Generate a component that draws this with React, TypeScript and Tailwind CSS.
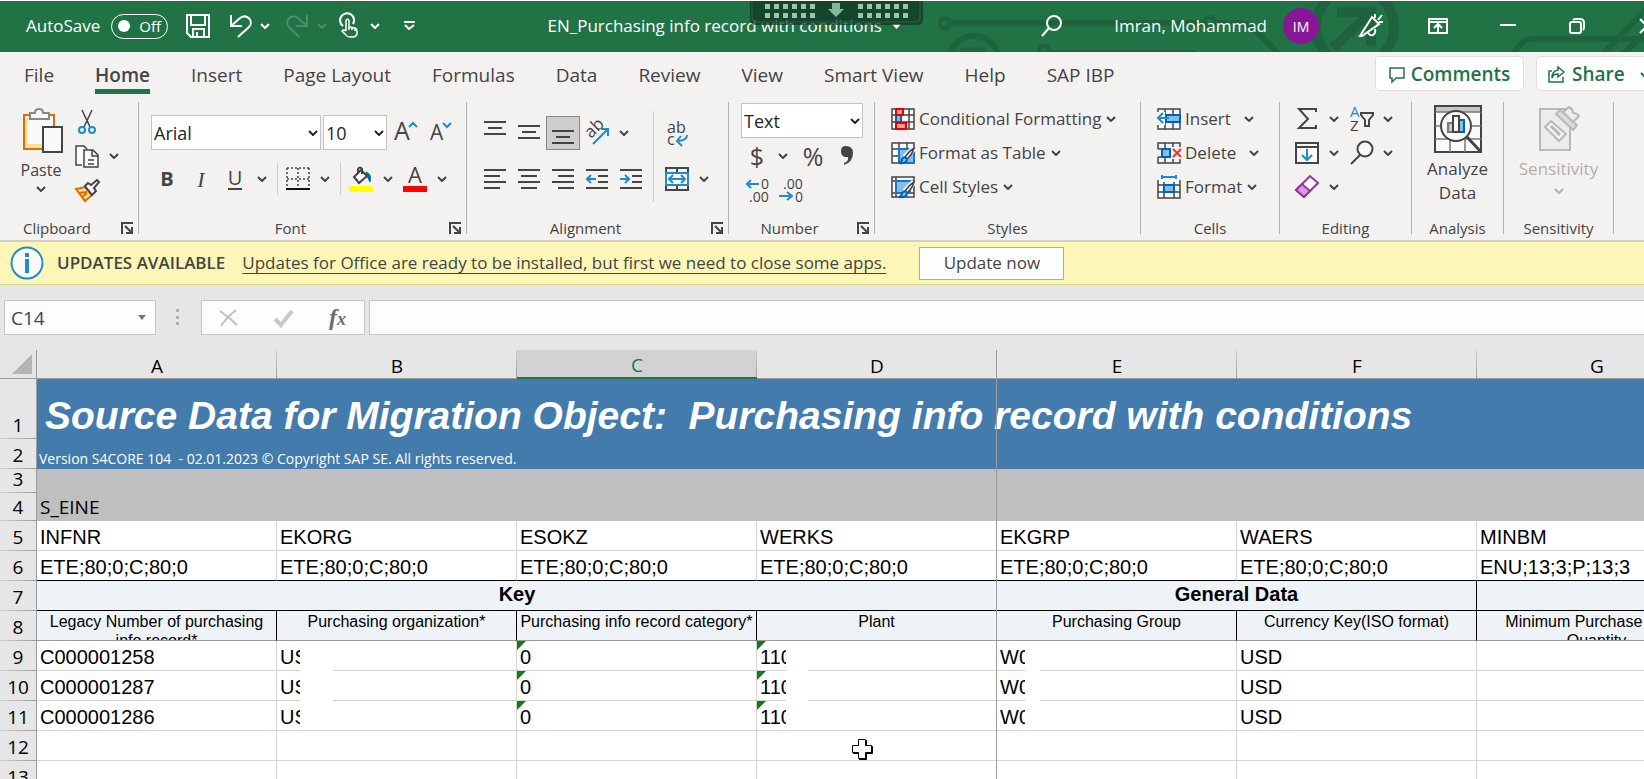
import type { ReactNode } from 'react'
import clsx from 'clsx'

const TABS = [
  'File',
  'Home',
  'Insert',
  'Page Layout',
  'Formulas',
  'Data',
  'Review',
  'View',
  'Smart View',
  'Help',
  'SAP IBP',
]

const COLUMNS = ['A', 'B', 'C', 'D', 'E', 'F', 'G']

const FIELDS = ['INFNR', 'EKORG', 'ESOKZ', 'WERKS', 'EKGRP', 'WAERS', 'MINBM']

const TYPES = [
  'ETE;80;0;C;80;0',
  'ETE;80;0;C;80;0',
  'ETE;80;0;C;80;0',
  'ETE;80;0;C;80;0',
  'ETE;80;0;C;80;0',
  'ETE;80;0;C;80;0',
  'ENU;13;3;P;13;3',
]

const HEADINGS = [
  'Legacy Number of purchasing info record*',
  'Purchasing organization*',
  'Purchasing info record category*',
  'Plant',
  'Purchasing Group',
  'Currency Key(ISO format)',
  'Minimum Purchase Order Quantity',
]

const RECORDS = [
  ['C000001258', 'US', '0', '110', 'W0', 'USD', ''],
  ['C000001287', 'US', '0', '110', 'W0', 'USD', ''],
  ['C000001286', 'US', '0', '110', 'W0', 'USD', ''],
]

const DARK = '#444444'
const BLUE = '#1e8bcd'

interface IconProps {
  w?: number
  h?: number
  children: ReactNode
}

function Icon({ w = 24, h = 24, children }: IconProps) {
  return (
    <svg
      width={w}
      height={h}
      viewBox={`0 0 ${w} ${h}`}
      fill="none"
      stroke={DARK}
      strokeWidth="2"
      className="shrink-0 overflow-visible"
      aria-hidden="true"
    >
      {children}
    </svg>
  )
}

function Chevron({ color = DARK }: { color?: string }) {
  return (
    <svg
      width="10"
      height="6"
      viewBox="0 0 10 6"
      fill="none"
      stroke={color}
      strokeWidth="2"
      className="shrink-0"
      aria-hidden="true"
    >
      <path d="M1 1l4 4 4-4" />
    </svg>
  )
}

function Tool({ label, active, children }: { label: string; active?: boolean; children: ReactNode }) {
  return (
    <button
      type="button"
      aria-label={label}
      className={clsx(
        'flex h-[34px] w-[34px] shrink-0 items-center justify-center',
        active && 'border border-[#8a8886] bg-[#cfcecd]'
      )}
    >
      {children}
    </button>
  )
}

function Drop({ label }: { label: string }) {
  return (
    <button
      type="button"
      aria-label={label}
      className="flex h-[34px] w-5 shrink-0 items-center justify-center"
    >
      <Chevron />
    </button>
  )
}

function Picker({ label, value, className }: { label: string; value: string; className: string }) {
  return (
    <div className={clsx('relative h-[35px] shrink-0', className)}>
      <select
        aria-label={label}
        className="h-full w-full appearance-none border border-[#c4c4c4] bg-white pt-px pl-[2px] text-[18px] text-[#262626]"
      >
        <option>{value}</option>
      </select>
      <span className="pointer-events-none absolute inset-y-0 right-[3px] flex items-center">
        <Chevron color="#262626" />
      </span>
    </div>
  )
}

function Divider() {
  return <div className="mr-[3px] ml-[5px] h-8 w-px bg-[#d0cecc]" />
}

interface GroupProps {
  name: string
  launcher?: boolean
  className: string
  children: ReactNode
}

function Group({ name, launcher, className, children }: GroupProps) {
  return (
    <section className={clsx('flex shrink-0', className)} aria-label={name}>
      <div className="flex h-[138px] flex-1 flex-col pb-[2px]">
        <div className="flex-1">{children}</div>
        <div className="flex h-5 items-center">
          <span className="flex-1 text-center text-[15px] leading-5">{name}</span>
          {launcher && (
            <button type="button" aria-label={`${name} settings`} className="w-6 pl-[7px]">
              <Icon w={13} h={13}>
                <path d="M1 12V1h11" />
                <path d="M4 4l6 6M11 5v6H5" />
              </Icon>
            </button>
          )}
        </div>
      </div>
      <div className="h-[132px] w-px bg-[#b3b0ad]" />
    </section>
  )
}

function TitleBar() {
  return (
    <header className="relative flex h-[52px] items-center overflow-hidden border-t border-white bg-[#217346] pb-px pl-[26px] text-[17px] text-white">
      <svg
        className="absolute top-0 right-0"
        width="784"
        height="52"
        viewBox="860 0 784 52"
        fill="none"
        stroke="#1e633e"
        strokeWidth="6"
        aria-hidden="true"
      >
        <circle cx="945" cy="22" r="5" strokeWidth="4" />
        <path d="M951 22H1204" />
        <circle cx="1210" cy="21" r="5" strokeWidth="4" />
        <path d="M1216 22H1240q8 0 14 6l26 26" />
        <circle cx="974" cy="60" r="25" />
        <path d="M960 49h25M954 53h36" strokeWidth="5" />
        <circle cx="1044" cy="50" r="5" strokeWidth="4" />
        <path d="M1050 51H1195" strokeWidth="4" />
        <circle cx="1355" cy="26" r="39" strokeWidth="10" />
        <path d="M1337 11h34v34M1369 13l-36 34" strokeWidth="10" />
        <path d="M1512 54l10-12q4-4 9-4h113" />
        <path d="M1602 54l44-46M1622 54l24-22" />
      </svg>

      <label className="relative flex items-center gap-[11px]">
        AutoSave
        <input type="checkbox" role="switch" className="sr-only" />
        <span className="flex h-[25px] w-[57px] items-center rounded-full border border-white pl-[6px] text-[15px]">
          <span className="mr-[9px] h-3 w-3 rounded-full bg-white" />
          Off
        </span>
      </label>
      <div className="relative flex items-center">
        <button type="button" aria-label="Save" className="ml-[18px]">
          <Icon>
            <path d="M1 1h22v22H5l-4-4z M5 1v10h14V1 M7 23v-8h11v8 M11 18v5" stroke="#fff" />
          </Icon>
        </button>
        <button type="button" aria-label="Undo" className="ml-[19px]">
          <Icon w={23}>
            <path d="M2 1v11h11 M2 12L11 4c8-5 14 4 9 9L9 23" stroke="#fff" />
          </Icon>
        </button>
        <button type="button" aria-label="Undo history" className="ml-2">
          <Chevron color="#fff" />
        </button>
        <button type="button" aria-label="Redo" className="ml-4">
          <Icon w={23}>
            <path d="M21 1v11H10 M21 12L12 4C4-1-2 8 3 13l10 10" stroke="#4d8f6b" />
          </Icon>
        </button>
        <button type="button" aria-label="Redo history" className="ml-2">
          <Chevron color="#4d8f6b" />
        </button>
        <button type="button" aria-label="Touch mode" className="ml-[13px]">
          <Icon w={18}>
            <path d="M3 12A7 7 0 1 1 13 10" stroke="#fff" />
            <path
              d="M6 17V7c0-2.5 3-2.5 3 0v6l6 1q2 1 2 3v3q-1 3-4 3h-3q-3 0-4-2l-4-4q1-2 4 0M9 13v3M12 13v3M15 14v3"
              stroke="#fff"
              strokeWidth="1.5"
            />
          </Icon>
        </button>
        <button type="button" aria-label="Touch mode options" className="ml-3">
          <Chevron color="#fff" />
        </button>
        <button type="button" aria-label="Customize toolbar" className="ml-6">
          <Icon w={11} h={10}>
            <path d="M0 1h11M1 4l4 4 5-4" stroke="#fff" />
          </Icon>
        </button>
      </div>

      <h1 className="relative flex flex-1 items-center justify-center gap-[10px] pr-2 whitespace-nowrap">
        EN_Purchasing info record with conditions
        <svg width="9" height="5" viewBox="0 0 9 5" fill="#fff" aria-hidden="true">
          <path d="M0 0h9L4.5 5z" />
        </svg>
      </h1>

      <div className="relative -mr-[11px] flex items-center">
        <button type="button" aria-label="Search">
          <Icon w={22} h={22}>
            <circle cx="13" cy="8" r="7" stroke="#fff" />
            <path d="M8 13l-7 8" stroke="#fff" />
          </Icon>
        </button>
        <button type="button" className="ml-[51px] flex items-center gap-4">
          Imran, Mohammad
          <span className="flex h-9 w-9 items-center justify-center rounded-full bg-[#881798] text-[14px]">
            IM
          </span>
        </button>
        <button type="button" aria-label="What's new" className="ml-10">
          <Icon>
            <path d="M1 22L13 3l7 7-17 12zM9 18q1 4 5 3 3-2 2-6" stroke="#fff" />
            <path d="M16 4V0M19 6l4-5M20 8h4" stroke="#fff" />
          </Icon>
        </button>
        <button type="button" aria-label="Ribbon display options" className="ml-[45px]">
          <Icon w={20} h={16}>
            <path d="M1 1h18v14H1zM1 4h18M10 14V7M6 10l4-4 4 4" stroke="#fff" />
          </Icon>
        </button>
        <button type="button" aria-label="Minimize" className="ml-[52px]">
          <Icon w={16} h={16}>
            <path d="M0 7h16" stroke="#fff" />
          </Icon>
        </button>
        <button type="button" aria-label="Restore" className="ml-[53px]">
          <Icon w={16} h={16}>
            <rect x="1" y="4" width="11" height="11" rx="2" stroke="#fff" />
            <path d="M4 2q1-1 3-1h4q4 0 4 4v4q0 2-1 3" stroke="#fff" />
          </Icon>
        </button>
        <button type="button" aria-label="Close" className="ml-[54px]">
          <Icon w={16} h={16}>
            <path d="M1 1l14 14M15 1L1 15" stroke="#fff" />
          </Icon>
        </button>
      </div>

      {/* remote session handle */}
      <svg
        className="absolute top-0 left-[750px]"
        width="173"
        height="25"
        viewBox="0 0 173 25"
        aria-hidden="true"
      >
        <path d="M0 0h173v18q0 6-6 6H6q-6 0-6-6z" fill="#0f3320" fillOpacity=".7" />
        <path d="M2 0v17q0 4 4 4h159q5 0 5-4V0" fill="none" stroke="#3d6b52" strokeOpacity=".7" />
        {[0, 1, 2, 3, 4, 5].map((i) => (
          <g key={i} fill="#9cc5ae">
            <rect x={15 + i * 9} y="3" width="5" height="5" />
            <rect x={15 + i * 9} y="12" width="5" height="5" />
            <rect x={108 + i * 9} y="3" width="5" height="5" />
            <rect x={108 + i * 9} y="12" width="5" height="5" />
          </g>
        ))}
        <path d="M82 2h8v6h4l-8 8-8-8h4z" fill="#84ba9b" />
      </svg>
    </header>
  )
}

function TabRow() {
  return (
    <nav className="flex h-[50px] items-start justify-between overflow-hidden pt-1">
      <div className="flex gap-[41px] pt-1 pl-6 whitespace-nowrap">
        {TABS.map((tab) => (
          <button
            type="button"
            key={tab}
            className={clsx(
              'h-[34px] border-b-[5px] pt-[2px] text-[19px] leading-[27px]',
              tab === 'Home' ? 'border-[#217346] font-semibold' : 'border-transparent'
            )}
          >
            {tab}
          </button>
        ))}
      </div>
      <div className="-mr-5 flex gap-3 text-[19px] font-semibold text-[#217346]">
        <button
          type="button"
          className="flex h-[35px] w-[149px] items-center justify-center gap-[6px] rounded-[4px] border border-[#e1dfdd] bg-white pt-[2px]"
        >
          <Icon w={16} h={16}>
            <path d="M1 1h14v10H7l-4 4v-4H1z" stroke="#217346" strokeWidth="1.5" />
          </Icon>
          Comments
        </button>
        <button
          type="button"
          className="flex h-[35px] w-[128px] items-center gap-[7px] rounded-[4px] border border-[#e1dfdd] bg-white pt-[2px] pl-[11px]"
        >
          <Icon w={17} h={17}>
            <path d="M4 5H1v11h14v-5M10 1l6 5-6 5V8q-5 0-6 4 0-7 6-8z" stroke="#217346" strokeWidth="1.5" />
          </Icon>
          Share
          <span className="pl-2">
            <Chevron color="#217346" />
          </span>
        </button>
      </div>
    </nav>
  )
}

function ClipboardGroup() {
  return (
    <Group name="Clipboard" launcher className="w-[139px]">
      <div className="flex gap-2 pl-5">
        <button type="button" className="flex flex-col items-center pt-[6px] text-[16px]">
          <Icon w={42} h={46}>
            <path d="M3 7h32v34H3z" fill="#fafafa" stroke="none" />
            <path d="M6 10v28h16" stroke="#fbdf9c" strokeWidth="4" />
            <path d="M10 7H4v34h18M28 7h6v11" stroke="#e06c00" />
            <path d="M10 11V5h5q0-4 4-4t4 4h6v6z" fill="#fafafa" stroke="#8a8886" />
            <path d="M23 19h19v25H23z" fill="#fafafa" />
          </Icon>
          <span className="leading-8">Paste</span>
          <Chevron />
        </button>
        <div className="flex flex-col pt-[3px]">
          <Tool label="Cut">
            <Icon w={18} h={26}>
              <path d="M4 1l8 17M14 1L6 18" strokeWidth="1.5" />
              <circle cx="4" cy="21" r="3" stroke={BLUE} />
              <circle cx="14" cy="21" r="3" stroke={BLUE} />
            </Icon>
          </Tool>
          <div className="flex">
            <Tool label="Copy">
              <Icon w={26}>
                <path d="M8 21H2V2h8l3 3" fill="#fafafa" strokeWidth="1.5" />
                <path d="M10 6h9l5 5v12H10zM18 6v6h6M14 16h6M14 20h6" fill="#fafafa" strokeWidth="1.5" />
              </Icon>
            </Tool>
            <Drop label="Copy options" />
          </div>
          <Tool label="Format painter">
            <Icon w={26}>
              <path d="M2 11l9-2 7 8-7 6z" fill="#fbdf9c" stroke="#e06c00" />
              <path d="M5 15l8-1M8 19l5-4" stroke="#e06c00" />
              <path d="M11 8l3-3 3 2 6-5 2 2-5 6 2 3-4 4z" fill="#fafafa" />
            </Icon>
          </Tool>
        </div>
      </div>
    </Group>
  )
}

function FontGroup() {
  return (
    <Group name="Font" launcher className="w-[328px]">
      <div className="flex flex-col gap-3 pt-[13px] pl-[11px]">
        <div className="flex pl-px">
          <Picker label="Font" value="Arial" className="mr-[2px] w-[170px]" />
          <Picker label="Font size" value="10" className="w-16" />
          <Tool label="Increase font size">
            <Icon>
              <text x="2" y="20" fontSize="25" fill={DARK} stroke="none">
                A
              </text>
              <path d="M17 7l4-4 4 4" stroke={BLUE} />
            </Icon>
          </Tool>
          <Tool label="Decrease font size">
            <Icon>
              <text x="4" y="20" fontSize="21" fill={DARK} stroke="none">
                A
              </text>
              <path d="M17 3l4 4 4-4" stroke={BLUE} />
            </Icon>
          </Tool>
        </div>
        <div className="flex items-center text-[20px]">
          <Tool label="Bold">
            <b>B</b>
          </Tool>
          <Tool label="Italic">
            <i className="font-['Liberation_Serif'] text-[22px]">I</i>
          </Tool>
          <Tool label="Underline">
            <span className="border-b-2 border-[#444] leading-5">U</span>
          </Tool>
          <Drop label="Underline options" />
          <Divider />
          <Tool label="Borders">
            <Icon>
              <path d="M1 1h22M1 12h22M1 1v20M12 1v20M23 1v20" strokeDasharray="2 2" strokeWidth="1.5" />
              <path d="M0 22h24" stroke="#111" />
            </Icon>
          </Tool>
          <Drop label="Border options" />
          <Divider />
          <Tool label="Fill color">
            <Icon w={26} h={26}>
              <path d="M6 11l7-7 6 6-8 7z" fill="#fafafa" />
              <path d="M10 8V3q2-3 4 0v5" />
              <path d="M18 6q6 2 4 10-3-5-4-10z" fill="#0063b1" stroke="#0063b1" strokeWidth="1" />
              <path d="M1 23h24" stroke="#ffff00" strokeWidth="6" />
            </Icon>
          </Tool>
          <Drop label="Fill color options" />
          <Tool label="Font color">
            <Icon w={26} h={26}>
              <text x="6" y="17" fontSize="22" fill={DARK} stroke="none">
                A
              </text>
              <path d="M1 23h24" stroke="#ff0000" strokeWidth="6" />
            </Icon>
          </Tool>
          <Drop label="Font color options" />
        </div>
      </div>
    </Group>
  )
}

function AlignmentGroup() {
  return (
    <Group name="Alignment" launcher className="w-[262px]">
      <div className="flex pl-[11px]">
        <div className="flex w-[175px] flex-col gap-3 pt-[14px]">
          <div className="flex">
            <Tool label="Top align">
              <Icon w={22}>
                <path d="M0 1h22M4 7h14M0 13h22" />
              </Icon>
            </Tool>
            <Tool label="Middle align">
              <Icon w={22}>
                <path d="M0 5h22M4 11h14M0 17h22" />
              </Icon>
            </Tool>
            <Tool label="Bottom align" active>
              <Icon w={22}>
                <path d="M0 10h22M4 16h14M0 22h22" />
              </Icon>
            </Tool>
            <Tool label="Orientation">
              <Icon w={26} h={26}>
                <text x="0" y="0" fontSize="17" fill={DARK} stroke="none" transform="translate(7 19) rotate(-45)">
                  ab
                </text>
                <path d="M9 24L24 9M17 9h7v7" stroke={BLUE} />
              </Icon>
            </Tool>
            <Drop label="Orientation options" />
          </div>
          <div className="flex">
            <Tool label="Align left">
              <Icon w={22}>
                <path d="M0 3h22M0 9h16M0 15h22M0 21h16" />
              </Icon>
            </Tool>
            <Tool label="Center">
              <Icon w={22}>
                <path d="M0 3h22M3 9h16M0 15h22M3 21h16" />
              </Icon>
            </Tool>
            <Tool label="Align right">
              <Icon w={22}>
                <path d="M0 3h22M6 9h16M0 15h22M6 21h16" />
              </Icon>
            </Tool>
            <Tool label="Decrease indent">
              <Icon w={22}>
                <path d="M0 3h22M12 9h10M12 15h10M0 21h22" />
                <path d="M10 12H1M5 8l-4 4 4 4" stroke={BLUE} />
              </Icon>
            </Tool>
            <Tool label="Increase indent">
              <Icon w={22}>
                <path d="M0 3h22M12 9h10M12 15h10M0 21h22" />
                <path d="M0 12h8M5 8l4 4-4 4" stroke={BLUE} />
              </Icon>
            </Tool>
          </div>
        </div>
        <div className="mt-[9px] h-[91px] w-px bg-[#d0cecc]" />
        <div className="flex flex-col gap-3 pt-[14px] pl-[6px]">
          <Tool label="Wrap text">
            <Icon w={24} h={28}>
              <text x="2" y="14" fontSize="16" fill={DARK} stroke="none">
                ab
              </text>
              <text x="2" y="26" fontSize="16" fill={DARK} stroke="none">
                c
              </text>
              <path d="M22 16q0 6-10 6M16 17l-4 5 5 5" stroke={BLUE} />
            </Icon>
          </Tool>
          <div className="flex">
            <Tool label="Merge and center">
              <Icon>
                <path d="M1 1h22v22H1zM12 1v5M12 18v5" />
                <path d="M1 6h22v12H1z" fill="#fafafa" stroke={BLUE} />
                <path d="M4 12h16M8 8l-4 4 4 4M16 8l4 4-4 4" stroke={BLUE} />
              </Icon>
            </Tool>
            <Drop label="Merge options" />
          </div>
        </div>
      </div>
    </Group>
  )
}

function NumberGroup() {
  return (
    <Group name="Number" launcher className="w-[146px]">
      <div className="pt-px pl-3">
        <Picker label="Number format" value="Text" className="w-[122px]" />
        <div className="flex items-center">
          <button type="button" aria-label="Currency" className="w-8 text-[25px] leading-9">
            $
          </button>
          <Drop label="Currency options" />
          <button type="button" aria-label="Percent" className="w-10 text-[25px] leading-9">
            %
          </button>
          <button
            type="button"
            aria-label="Comma style"
            className="flex w-7 items-center justify-center"
          >
            <svg width="12" height="20" viewBox="0 0 12 20" fill={DARK} aria-hidden="true">
              <path d="M5 0q7 0 7 7 0 9-9 12v-2q5-2 4-6-7 1-7-6 0-5 5-5z" />
            </svg>
          </button>
        </div>
        <div className="flex">
          <Tool label="Increase decimal">
            <Icon w={26} h={26}>
              <text x="16" y="11" fontSize="14" fill={DARK} stroke="none">
                0
              </text>
              <text x="4" y="24" fontSize="14" fill={DARK} stroke="none">
                .00
              </text>
              <path d="M14 6H2M6 2L2 6l4 4" stroke={BLUE} />
            </Icon>
          </Tool>
          <Tool label="Decrease decimal">
            <Icon w={26} h={26}>
              <text x="4" y="11" fontSize="14" fill={DARK} stroke="none">
                .00
              </text>
              <text x="16" y="24" fontSize="14" fill={DARK} stroke="none">
                0
              </text>
              <path d="M0 18h13M8 14l5 4-5 4" stroke={BLUE} />
            </Icon>
          </Tool>
        </div>
      </div>
    </Group>
  )
}

function CommandRow({ icon, text, wide }: { icon: ReactNode; text: string; wide?: boolean }) {
  return (
    <button type="button" className="flex h-[34px] items-center text-[17px] whitespace-nowrap">
      {icon}
      <span className={clsx('pl-1', wide ? 'pr-[13px]' : 'pr-[5px]')}>{text}</span>
      <Chevron />
    </button>
  )
}

function Brush() {
  return (
    <>
      <path d="M23 7L14 16" stroke="#fafafa" strokeWidth="6" />
      <path d="M23 7q-5 3-9 9l2 2q5-4 7-11z" fill="#fafafa" strokeWidth="1.5" />
      <path d="M8 22q3-1 3-4 3-3 5 0 0 5-8 4z" fill="#83beec" stroke="#0063b1" />
    </>
  )
}

function StylesGroup() {
  return (
    <Group name="Styles" className="w-[266px]">
      <div className="flex flex-col items-start pl-4">
        <CommandRow
          text="Conditional Formatting"
          icon={
            <Icon>
              <path d="M1 2h22v20H1zM1 8h22M1 15h22M5 2v20M18 2v20" fill="#fafafa" strokeWidth="1.5" />
              <path d="M5 8h5v7H5z" fill="#83beec" stroke="#0063b1" />
              <path d="M5 2h7v6H5zM5 16h10v6H5z" fill="#ff9a9a" stroke="#e00000" />
            </Icon>
          }
        />
        <CommandRow
          text="Format as Table"
          icon={
            <Icon>
              <path d="M1 2h22v20H1zM1 8h22M1 15h22M8 2v20M16 2v20" fill="#fafafa" strokeWidth="1.5" />
              <path d="M8 8h15v14H8z" fill="#83beec" stroke="#1e75bd" />
              <Brush />
            </Icon>
          }
        />
        <CommandRow
          text="Cell Styles"
          icon={
            <Icon>
              <path d="M1 2h22v20H1zM1 6h22M5 2v20M1 18h22" fill="#fafafa" strokeWidth="1.5" />
              <path d="M5 6h14v12H5z" fill="#83beec" stroke="#1e75bd" />
              <Brush />
            </Icon>
          }
        />
      </div>
    </Group>
  )
}

function CellsGroup() {
  return (
    <Group name="Cells" className="w-[139px]">
      <div className="flex flex-col items-start pl-4">
        <CommandRow
          wide
          text="Insert"
          icon={
            <Icon>
              <path d="M1 2h22v20H1zM1 8h22M1 15h22M8 2v20M16 2v20" fill="#fafafa" strokeWidth="1.5" />
              <path d="M9 8h14v7H9z" fill="#83beec" stroke="#0063b1" />
              <path d="M0 5h8v13H0z" fill="#f3f2f1" stroke="none" />
              <path d="M12 11H1M6 6l-5 5 5 5" stroke={BLUE} />
            </Icon>
          }
        />
        <CommandRow
          wide
          text="Delete"
          icon={
            <Icon>
              <path d="M1 8V2h22v5M1 16v6h22v-6M8 2v6M16 2v6M8 16v6M16 16v6M1 8h22M1 16h22" strokeWidth="1.5" />
              <path d="M5 8h8v8H5z" fill="#83beec" stroke="#0063b1" />
              <path d="M14 6h10v12H14z" fill="#f3f2f1" stroke="none" />
              <path d="M16 8l8 8M24 8l-8 8" stroke="#e8333a" />
            </Icon>
          }
        />
        <CommandRow
          text="Format"
          icon={
            <Icon>
              <path d="M1 5v18h22V5M1 10h22M1 17h22M7 7v16M17 7v16" fill="#fafafa" strokeWidth="1.5" />
              <path d="M7 10h10v7H7z" fill="#83beec" stroke="#0063b1" />
              <path d="M5 2h14M5 0v4M19 0v4" stroke={BLUE} />
            </Icon>
          }
        />
      </div>
    </Group>
  )
}

function EditingGroup() {
  return (
    <Group name="Editing" className="w-[132px]">
      <div className="grid grid-cols-[34px_20px_34px_20px] pl-[10px]">
        <Tool label="AutoSum">
          <Icon w={20}>
            <path d="M19 5V2H2l9 10-9 9h17v-3" />
          </Icon>
        </Tool>
        <Drop label="AutoSum options" />
        <Tool label="Sort and filter">
          <Icon w={26} h={26}>
            <text x="2" y="11" fontSize="15" fill={BLUE} stroke="none">
              A
            </text>
            <text x="2" y="25" fontSize="15" fill={DARK} stroke="none">
              Z
            </text>
            <path d="M13 7h12v2l-4 5v6h-4v-6l-4-5z" />
          </Icon>
        </Tool>
        <Drop label="Sort options" />
        <Tool label="Fill">
          <Icon>
            <path d="M1 2h22v20H1zM1 6h22" fill="#fafafa" />
            <path d="M12 8v11M7 14l5 5 5-5" stroke={BLUE} />
          </Icon>
        </Tool>
        <Drop label="Fill options" />
        <Tool label="Find and select">
          <Icon>
            <circle cx="16" cy="8" r="7.5" fill="#fafafa" />
            <path d="M11 14l-9 9" />
          </Icon>
        </Tool>
        <Drop label="Find options" />
        <Tool label="Clear">
          <Icon>
            <path d="M1 15L15 1l8 7L9 22z" fill="#fafafa" stroke="#9b2fa3" />
            <path d="M1 15l6-6 8 7-6 6z" fill="#d59ddb" stroke="#9b2fa3" />
          </Icon>
        </Tool>
        <Drop label="Clear options" />
      </div>
    </Group>
  )
}

function AnalysisGroup() {
  return (
    <Group name="Analysis" className="w-[92px]">
      <button type="button" className="flex w-full flex-col items-center pt-[3px] text-[17px] leading-6">
        <Icon w={48} h={48}>
          <path d="M1 1h46v46H1z" fill="#fafafa" />
          <path d="M2 2h44v5H2z" fill="#c8c6c4" stroke="none" />
          <path d="M1 7h46M1 21h46M1 34h46M16 34v13M31 34v13" strokeWidth="1.5" stroke="#797775" />
          <circle cx="22" cy="21" r="15" fill="#fafafa" />
          <path d="M33 32l14 15" strokeWidth="3" />
          <path d="M14 18h5v9h-5z" fill="#c8c6c4" stroke="#797775" />
          <path d="M25 15h5v12h-5z" fill="#83beec" stroke="#0063b1" />
          <path d="M19 11h6v16h-6z" fill="#fff" />
        </Icon>
        <span className="pt-1">Analyze</span>
        <span>Data</span>
      </button>
    </Group>
  )
}

function SensitivityGroup() {
  return (
    <Group name="Sensitivity" className="w-[110px]">
      <button
        type="button"
        disabled
        className="flex w-full flex-col items-center pt-[3px] text-[17px] leading-6 text-[#b1afad]"
      >
        <Icon w={40} h={48}>
          <path d="M1 4h30v41H1z" fill="#ececec" stroke="#b8b8b8" />
          <path d="M6 22l6-6 15 13-7 7z" fill="#f3f2f1" stroke="#b8b8b8" />
          <path d="M12 21l9 9" stroke="#b8b8b8" strokeWidth="3" />
          <path d="M17 9l4-4 17 15-4 5z" fill="#dcdcdc" stroke="#b8b8b8" />
          <path d="M24 7l6-5q4 2 4 6 4 0 6 3l-6 6z" fill="#ececec" stroke="#b8b8b8" />
        </Icon>
        <span className="pt-1">Sensitivity</span>
        <span className="flex h-5 items-center">
          <Chevron color="#b1afad" />
        </span>
      </button>
    </Group>
  )
}

function UpdateBar() {
  return (
    <div className="flex h-11 items-center border-y border-[#d8d78c] bg-[#fcf7b6] pl-[10px] text-[17px]">
      <Icon w={34} h={34}>
        <circle cx="17" cy="17" r="15.5" fill="#fafafa" stroke={BLUE} />
        <path d="M17 7v4M17 13v14" stroke={BLUE} strokeWidth="4" />
      </Icon>
      <strong className="pl-[13px] font-semibold whitespace-nowrap">UPDATES AVAILABLE</strong>
      <a href="#" className="ml-[17px] whitespace-nowrap underline underline-offset-4">
        Updates for Office are ready to be installed, but first we need to close some apps.
      </a>
      <button
        type="button"
        className="ml-[33px] h-[33px] w-[145px] shrink-0 border border-[#ababab] bg-[#fdfdfd]"
      >
        Update now
      </button>
    </div>
  )
}

function FormulaBar() {
  return (
    <div className="flex h-[65px] items-center bg-[#e6e6e6] pl-1">
      <div className="relative h-[35px] w-[152px] shrink-0">
        <input
          aria-label="Name box"
          defaultValue="C14"
          className="h-full w-full border border-[#c6c6c6] bg-[#fdfdfd] pl-[6px] text-[19px]"
        />
        <svg
          className="absolute top-[15px] right-[10px]"
          width="8"
          height="5"
          viewBox="0 0 8 5"
          fill="#777"
          aria-hidden="true"
        >
          <path d="M0 0h8L4 5z" />
        </svg>
      </div>
      <svg width="45" height="17" viewBox="0 0 45 17" fill="#b0b0b0" className="shrink-0" aria-hidden="true">
        <path d="M20 0h3v3h-3zM20 7h3v3h-3zM20 13h3v3h-3z" />
      </svg>
      <div className="flex h-[35px] w-[164px] shrink-0 items-center justify-between border border-[#c6c6c6] bg-[#fdfdfd] pr-[18px] pl-[17px]">
        <button type="button" aria-label="Cancel">
          <Icon w={19} h={18}>
            <path d="M1 2q9 6 17 14M17 1Q8 8 2 17" stroke="#c0c0c0" />
          </Icon>
        </button>
        <button type="button" aria-label="Enter">
          <Icon w={20} h={18}>
            <path d="M1 10l6 6L18 2" stroke="#c8c8c8" strokeWidth="4" />
          </Icon>
        </button>
        <button
          type="button"
          aria-label="Insert function"
          className="font-['Liberation_Serif'] text-[24px] leading-6 font-bold text-[#6e6e6e] italic"
        >
          f<span className="text-[18px]">x</span>
        </button>
      </div>
      <input
        aria-label="Formula"
        className="ml-1 h-[35px] min-w-0 flex-1 border border-r-0 border-[#c6c6c6] bg-[#fdfdfd]"
      />
    </div>
  )
}

function RowHead({ n }: { n: number }) {
  return (
    <th
      scope="row"
      className="overflow-hidden border-r border-[#9b9b9b] bg-[#e6e6e6] bg-[linear-gradient(to_right,#d0d0d0,#9b9b9b)] bg-[length:100%_1px] bg-bottom bg-no-repeat p-0 pb-1 align-bottom font-['Open_Sans'] text-[19px] leading-5 font-normal"
    >
      {n}
    </th>
  )
}

const CELL =
  'relative border-r border-b border-[#d4d4d4] p-0 pb-px pl-[3px] align-bottom leading-6 whitespace-nowrap'

function Blank({ last, className }: { last: boolean; className: string }) {
  return <span className={clsx('absolute top-0 bg-white', last ? 'bottom-0' : '-bottom-px', className)} />
}

function Sheet() {
  return (
    <main className="relative overflow-hidden">
      <table className="w-[1717px] table-fixed border-separate border-spacing-0 font-['Liberation_Sans'] text-[20px] text-black">
        <colgroup>
          <col className="w-[37px]" />
          {COLUMNS.map((c) => (
            <col key={c} className="w-[240px]" />
          ))}
        </colgroup>
        <thead>
          <tr className="h-[29px] bg-[#e6e6e6]">
            <th className="border-r border-b border-[#9b9b9b] p-0 align-bottom">
              <svg width="24" height="24" viewBox="0 0 24 24" fill="#b4b4b4" className="ml-auto" aria-hidden="true">
                <path d="M20 0v20H0z" />
              </svg>
            </th>
            {COLUMNS.map((c) => (
              <th
                key={c}
                scope="col"
                className={clsx(
                  "bg-[linear-gradient(to_bottom,#d0d0d0,#9b9b9b)] bg-[length:1px_100%] bg-right bg-no-repeat p-0 align-bottom font-['Open_Sans'] text-[19px] leading-6 font-normal",
                  c === 'C'
                    ? 'border-b-2 border-[#217346] bg-[#d2d2d2] text-[#217346]'
                    : 'border-b border-[#9b9b9b]'
                )}
              >
                {c}
              </th>
            ))}
          </tr>
        </thead>
        <tbody>
          <tr className="h-[60px]">
            <RowHead n={1} />
            <td
              colSpan={7}
              className="bg-[#427bac] p-0 pl-2 align-bottom text-[39px] leading-[46px] font-bold whitespace-pre text-white italic"
            >
              {'Source Data for Migration Object:  Purchasing info record with conditions'}
            </td>
          </tr>
          <tr className="h-[30px]">
            <RowHead n={2} />
            <td
              colSpan={7}
              className="bg-[#427bac] p-0 pl-[2px] align-bottom font-['Open_Sans'] text-[14px] leading-5 whitespace-pre text-white"
            >
              {'Version S4CORE 104  - 02.01.2023 © Copyright SAP SE. All rights reserved.'}
            </td>
          </tr>
          <tr className="h-6">
            <RowHead n={3} />
            <td colSpan={7} className="bg-[#bfbfbf]" />
          </tr>
          <tr className="h-7">
            <RowHead n={4} />
            <td
              colSpan={7}
              className="bg-[#bfbfbf] p-0 pb-[2px] pl-[3px] align-bottom font-['Open_Sans'] text-[19px] leading-6"
            >
              S_EINE
            </td>
          </tr>
          <tr className="h-[30px]">
            <RowHead n={5} />
            {FIELDS.map((f) => (
              <td key={f} className={CELL}>
                {f}
              </td>
            ))}
          </tr>
          <tr className="h-[30px]">
            <RowHead n={6} />
            {TYPES.map((t, i) => (
              <td key={COLUMNS[i]} className={clsx(CELL, 'border-b-black')}>
                {t}
              </td>
            ))}
          </tr>
          <tr className="h-[30px] bg-[#eef3f8] text-center font-bold">
            <RowHead n={7} />
            <td colSpan={4} className="border-b border-black p-0 align-top leading-[27px]">
              Key
            </td>
            <td colSpan={2} className="border-r border-b border-black p-0 align-top leading-[27px]">
              General Data
            </td>
            <td className="border-b border-black" />
          </tr>
          <tr className="h-[30px] bg-[#eef3f8] text-center text-[16px] leading-[19px]">
            <RowHead n={8} />
            {HEADINGS.map((h) => (
              <td key={h} className="border-r border-b border-r-black border-b-[#9b9b9b] p-0 align-top">
                <div className="h-[29px] overflow-hidden pt-px">{h}</div>
              </td>
            ))}
          </tr>
          {RECORDS.map((record, r) => (
            <tr key={record[0]} className="h-[30px]">
              <RowHead n={r + 9} />
              {record.map((value, i) => (
                <td key={COLUMNS[i]} className={CELL}>
                  {(i === 2 || i === 3) && (
                    <svg
                      className="absolute top-0 left-0"
                      width="9"
                      height="9"
                      viewBox="0 0 9 9"
                      fill="#107c10"
                      aria-hidden="true"
                    >
                      <path d="M0 0h9L0 9z" />
                    </svg>
                  )}
                  {value}
                  {/* blanked-out part of the code */}
                  {i === 1 && <Blank last={r === 2} className="left-[23px] w-[33px]" />}
                  {i === 3 && <Blank last={r === 2} className="left-[29px] w-[22px]" />}
                  {i === 4 && <Blank last={r === 2} className="left-[28px] w-[15px]" />}
                </td>
              ))}
            </tr>
          ))}
          {[12, 13].map((n) => (
            <tr key={n} className="h-[30px]">
              <RowHead n={n} />
              {COLUMNS.map((c) => (
                <td key={c} className={CELL} />
              ))}
            </tr>
          ))}
        </tbody>
      </table>
      {/* freeze pane line and cell cursor */}
      <div className="absolute inset-y-0 left-[996px] w-px bg-[#9b9b9b]" />
      <svg
        className="absolute top-[389px] left-[852px]"
        width="22"
        height="22"
        viewBox="0 0 22 22"
        aria-hidden="true"
      >
        <path d="M7.5 1.5h7v6h6v7h-6v6h-7v-6h-6v-7h6z" fill="#000" stroke="#000" />
        <path d="M6.5 .5h7v6h6v7h-6v6h-7v-6h-6v-7h6z" fill="#fff" stroke="#000" />
      </svg>
    </main>
  )
}

export default function App() {
  return (
    <div className="h-screen overflow-hidden bg-white font-['Open_Sans',sans-serif] text-[#444]">
      <TitleBar />
      <div className="border-b border-[#cfcdcb] bg-[#f3f2f1]">
        <TabRow />
        <div className="flex overflow-hidden">
          <ClipboardGroup />
          <FontGroup />
          <AlignmentGroup />
          <NumberGroup />
          <StylesGroup />
          <CellsGroup />
          <EditingGroup />
          <AnalysisGroup />
          <SensitivityGroup />
        </div>
      </div>
      <UpdateBar />
      <FormulaBar />
      <Sheet />
    </div>
  )
}
